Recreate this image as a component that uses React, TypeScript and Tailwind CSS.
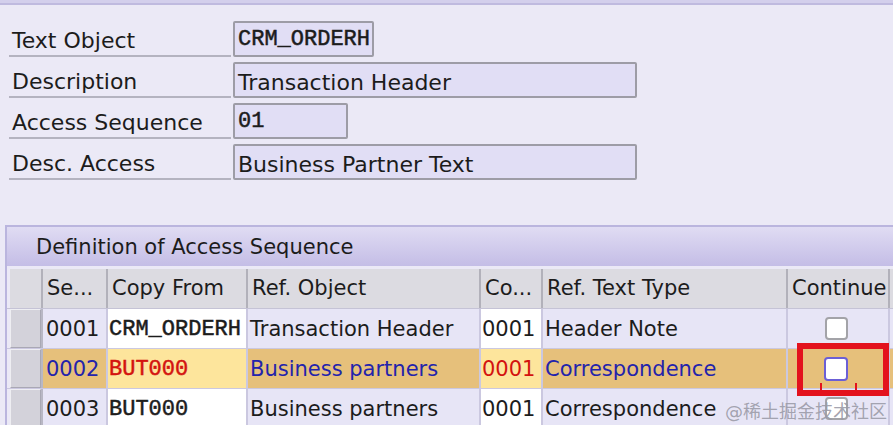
import React from 'react';

const SANS = { fontFamily: '"DejaVu Sans", Verdana, sans-serif' };
const MONO = { fontFamily: '"Liberation Mono", "Courier New", monospace', fontWeight: 400, WebkitTextStroke: '0.5px currentColor' };

type FieldRow = { label: string; value: string; width: string; mono?: boolean };

const fields: FieldRow[] = [
  { label: 'Text Object', value: 'CRM_ORDERH', width: 'w-[141px]', mono: true },
  { label: 'Description', value: 'Transaction Header', width: 'w-[404px]' },
  { label: 'Access Sequence', value: '01', width: 'w-[115px]', mono: true },
  { label: 'Desc. Access', value: 'Business Partner Text', width: 'w-[404px]' },
];

type Row = {
  seq: string;
  copyFrom: string;
  refObject: string;
  co: string;
  refType: string;
  selected?: boolean;
};

const rows: Row[] = [
  { seq: '0001', copyFrom: 'CRM_ORDERH', refObject: 'Transaction Header', co: '0001', refType: 'Header Note' },
  { seq: '0002', copyFrom: 'BUT000', refObject: 'Business partners', co: '0001', refType: 'Correspondence', selected: true },
  { seq: '0003', copyFrom: 'BUT000', refObject: 'Business partners', co: '0001', refType: 'Correspondence' },
];

function Checkbox({ focused }: { focused?: boolean }) {
  return (
    <div
      className={
        focused
          ? 'w-[24px] h-[24px] rounded-[4px] border-2 border-[#6b5fd6] bg-white'
          : 'w-[23px] h-[23px] rounded-[4px] border-2 border-[#a3a3a8] bg-white'
      }
    />
  );
}

function HeaderCell({ label, className }: { label: string; className: string }) {
  return (
    <div
      className={`h-full flex items-center pl-[4px] bg-[#dcdbe1] border-r-2 border-[#b2b1ba] text-[21px] text-[#1c1c1c] ${className}`}
    >
      {label}
    </div>
  );
}

export default function App() {
  return (
    <div
      className="relative w-[893px] h-[425px] overflow-hidden bg-[#ebe9f6] text-[#1c1c1c]"
      style={SANS}
    >
      {/* top edge */}
      <div className="h-[5px] bg-[#d3cfec] border-b-2 border-[#bfbadf]" />

      {/* Header fields */}
      <div className="flex flex-col gap-[5px] pt-[16px] pl-[9px]">
        {fields.map((f) => (
          <div key={f.label} className="flex items-stretch h-[36px]">
            <div className="w-[222px] pl-[3px] pt-[9px] border-b-2 border-[#b4b3c0] text-[22px] leading-none whitespace-nowrap">
              {f.label}
            </div>
            <div
              className={`ml-[2px] ${f.width} px-[3px] bg-[#e1def5] border-2 border-[#9d9ca6] rounded-[2px] text-[22px] leading-none whitespace-nowrap ${
                f.mono ? 'pt-[6px]' : 'pt-[8px]'
              }`}
              style={f.mono ? MONO : undefined}
            >
              {f.value}
            </div>
          </div>
        ))}
      </div>

      {/* Table */}
      <div className="mt-[45px] ml-[5px] border-l-2 border-t-2 border-[#bab5de] h-[210px] flex flex-col">
        <div className="h-[39px] flex items-center pl-[29px] pt-[2px] bg-gradient-to-b from-[#e0dcf3] to-[#c4bde6] text-[21px]">
          Definition of Access Sequence
        </div>
        <div className="h-[3px]" />

        {/* column header */}
        <div className="flex h-[40px] border-b border-[#c5c3d6] pl-[3px]">
          <div className="w-[33px] h-full bg-[#dcdbe1] border-r-2 border-[#b2b1ba]" />
          <HeaderCell label="Se..." className="w-[65px]" />
          <HeaderCell label="Copy From" className="w-[140px]" />
          <HeaderCell label="Ref. Object" className="w-[233px]" />
          <HeaderCell label="Co..." className="w-[62px]" />
          <HeaderCell label="Ref. Text Type" className="w-[245px]" />
          <HeaderCell label="Continue" className="w-[102px]" />
          <div className="flex-1 h-full bg-[#dcdbe1]" />
        </div>

        {rows.map((r) => {
          const disp = r.selected ? 'bg-[#e6c07b]' : 'bg-[#e7e5f6]';
          const input = r.selected ? 'bg-[#fde59c]' : 'bg-white';
          const blue = r.selected ? 'text-[#2323ac]' : 'text-[#1c1c1c]';
          const red = r.selected ? 'text-[#d3130f]' : 'text-[#1c1c1c]';
          const sep = 'border-r-2 border-[#cbc8e0]';
          return (
            <div key={r.seq} className="flex h-[40px] border-b border-[#cbc8e0] pl-[3px] text-[21px] leading-none">
              <div className="w-[33px] h-full border-r-2 border-[#b8b7c4]">
                <div className="h-full bg-[#d3d2da] border border-t-[#eeeef2] border-l-[#eeeef2] border-b-[#a9a8b4] border-r-[#a9a8b4]" />
              </div>
              <div className={`w-[65px] h-full flex items-center pl-[3px] pt-[2px] ${disp} ${sep} ${blue}`}>{r.seq}</div>
              <div
                className={`w-[140px] h-full flex items-center pl-[1px] pt-[2px] text-[22px] ${input} ${sep} ${red}`}
                style={MONO}
              >
                {r.copyFrom}
              </div>
              <div className={`w-[233px] h-full flex items-center pl-[2px] pt-[2px] ${disp} ${sep} ${blue}`}>{r.refObject}</div>
              <div className={`w-[62px] h-full flex items-center pl-[1px] pt-[2px] ${input} ${sep} ${red}`}>{r.co}</div>
              <div className={`w-[245px] h-full flex items-center pl-[2px] pt-[2px] ${disp} ${sep} ${blue}`}>{r.refType}</div>
              <div className={`w-[102px] h-full flex items-center justify-center pr-[4px] ${disp} ${sep}`}>
                <Checkbox focused={r.selected} />
              </div>
              <div className={`flex-1 h-full ${disp}`} />
            </div>
          );
        })}
      </div>

      {/* red highlight around the focused checkbox */}
      <div className="absolute left-[797px] top-[343px] w-[92px] h-[53px] border-[6px] border-[#e3121d]">
        <div className="absolute left-[17px] bottom-0 w-[2px] h-[7px] bg-[#e3121d]" />
        <div className="absolute left-[52px] bottom-0 w-[2px] h-[7px] bg-[#e3121d]" />
      </div>

      {/* watermark */}
      <div
        className="absolute right-[6px] bottom-[4px] text-[18px] leading-none text-[#9a9aa6]/90"
        style={{ fontFamily: '"DejaVu Sans", "Noto Sans CJK SC", sans-serif' }}
      >
        @稀土掘金技术社区
      </div>
    </div>
  );
}
